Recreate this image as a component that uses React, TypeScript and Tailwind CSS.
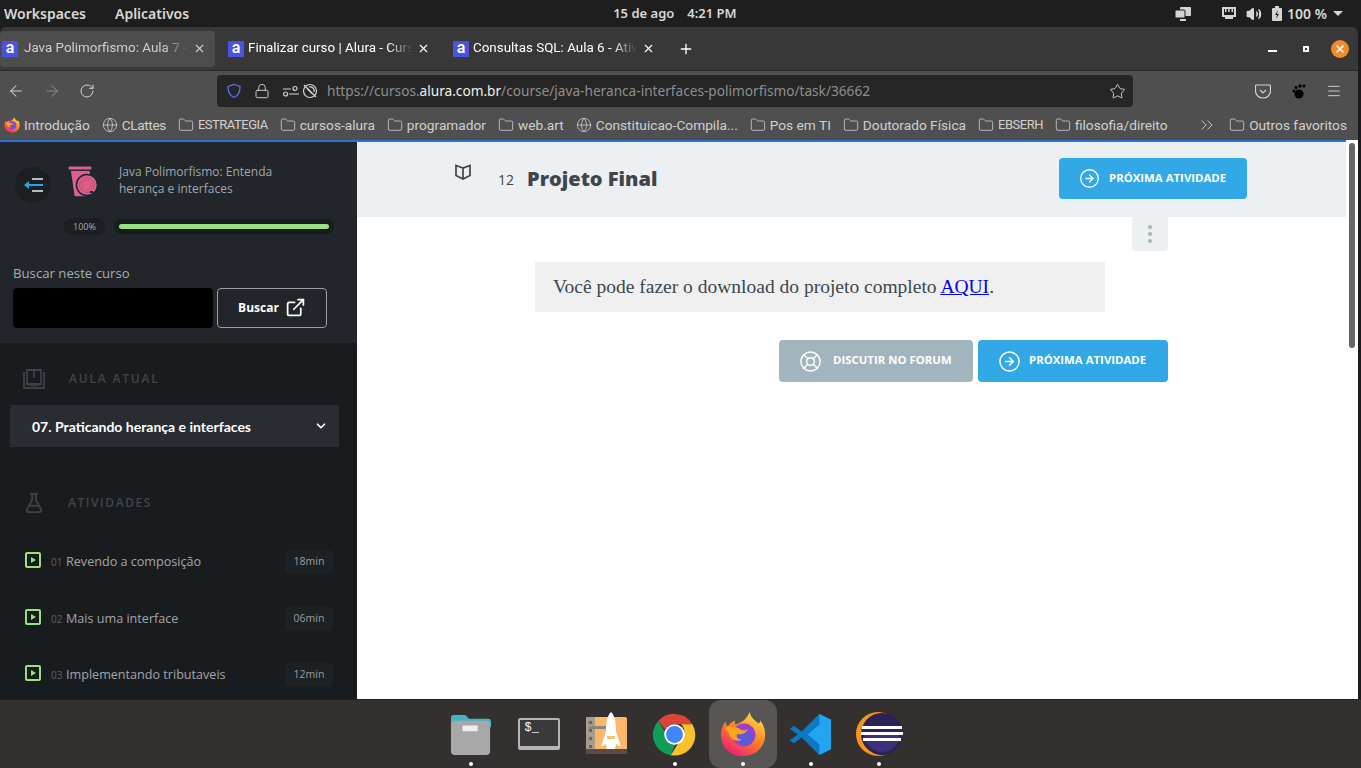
import { ArrowLeft, ArrowRight, RotateCw, Lock, Star, Menu, X, Plus, Folder, Globe, ChevronsRight, ChevronDown, FlaskConical, ExternalLink, LifeBuoy, CircleArrowRight, Volume2 } from "lucide-react"

const chrome = { fontFamily: '"Noto Sans", sans-serif' }
const roboto = { fontFamily: 'Roboto, sans-serif' }
const page = { fontFamily: '"Open Sans", sans-serif' }

function AluraIcon() {
  return (
    <span className="w-4 h-4 bg-[#4a53e0] text-white text-[16px] font-semibold leading-[14px] flex items-center justify-center shrink-0 pb-[2px]">a</span>
  )
}

function FirefoxIcon({ size }: { size: number }) {
  return (
    <svg width={size} height={size} viewBox="0 0 48 48" className="shrink-0">
      <defs>
        <linearGradient id={`ffa${size}`} x1="0.8" y1="0" x2="0.2" y2="1">
          <stop offset="0" stopColor="#ffe14d" />
          <stop offset="0.45" stopColor="#ff8a1f" />
          <stop offset="1" stopColor="#f0147a" />
        </linearGradient>
      </defs>
      <path d="M31 1c1 6 5 8 9 12 2-1 2-2 2-3 4 5 5 10 5 15 0 13-10 22-23 22S1 38 1 25C1 19 3 14 6 11c0 2 1 4 2 5 2-3 5-5 8-6-1 2-1 3 0 4 6-1 12-6 15-13z" fill={`url(#ffa${size})`} />
      <circle cx="25" cy="25" r="12" fill="#9a3fd1" />
      <circle cx="26" cy="28" r="8" fill="#5b5bd6" />
      <path d="M5 18c5-3 11-2 16 1 3 2 6 2 8-1-1 5-6 7-11 6-2 3 1 6 5 6-6 3-13-1-14-7-1-2-2-3-4-5z" fill="#ffa41f" />
    </svg>
  )
}

function Bookmark({ label, kind = "folder", textClass = "text-[13.7px]" }: { label: string; kind?: "folder" | "globe" | "firefox"; textClass?: string }) {
  return (
    <div className="flex items-center gap-[4px] text-[#cfcfcf] whitespace-nowrap">
      {kind === "folder" && <Folder size={16} strokeWidth={1.2} />}
      {kind === "globe" && <Globe size={16} strokeWidth={1.2} />}
      {kind === "firefox" && <FirefoxIcon size={16} />}
      <span className={textClass}>{label}</span>
    </div>
  )
}

function Tab({ title, active }: { title: string; active?: boolean }) {
  return (
    <div className={`h-[36px] rounded flex items-center text-[13.4px] shrink-0 ${active ? "w-[215px] bg-[#4d4d4d] text-[#cfcfcf] pl-[2px] gap-[6px]" : "w-[225px] text-white pl-[13px] gap-[4px]"}`} style={roboto}>
      <AluraIcon />
      <span className="w-[164px] overflow-hidden whitespace-nowrap [mask-image:linear-gradient(to_right,black_85%,transparent)]">{title}</span>
      <X size={13} className={`shrink-0 ${active ? "-ml-[1px]" : "ml-[1px]"}`} />
    </div>
  )
}

function ActivityRow({ num, title, time }: { num: string; title: string; time: string }) {
  return (
    <div className="h-[24px] flex items-center mt-[33px] first:mt-0 last:mt-[32px] pl-[25px] pr-[24px]">
      <span className="w-4 h-4 border-2 border-[#9be07f] rounded-[2px] flex items-center justify-center -mt-[5px] mr-[10px]">
        <span className="border-l-[5px] border-l-[#9be07f] border-y-[3px] border-y-transparent" />
      </span>
      <span className="text-[10px] text-[#5a6066] w-[15px]">{num}</span>
      <span className="text-[12.6px] text-[#a3a5a7] flex-1">{title}</span>
      <span className="text-[10.5px] text-[#9a9c9e] bg-[#1e2124] h-[24px] w-[48px] flex items-center justify-center rounded-sm">{time}</span>
    </div>
  )
}

function ActionButton({ label, className, icon }: { label: string; className: string; icon: React.ReactNode }) {
  return (
    <div className={`rounded flex items-center text-white text-[11.4px] font-bold ${className}`}>
      {icon}
      <span className="-mt-[2px]">{label}</span>
    </div>
  )
}

function DockItem({ children, active, dot = true }: { children: React.ReactNode; active?: boolean; dot?: boolean }) {
  return (
    <div className={`relative w-[68px] h-[68px] rounded-xl flex items-center justify-center ${active ? "bg-[#585654]" : ""}`}>
      {children}
      {dot && <span className="absolute bottom-[2px] left-1/2 -ml-[2px] w-[4px] h-[4px] rounded-full bg-white" />}
    </div>
  )
}

export default function App() {
  return (
    <div className="w-[1361px] h-[768px] overflow-hidden flex flex-col bg-[#1c1c1e]" style={chrome}>
      <div className="h-[27px] bg-[#1f1e1e] text-[#d8d8d8] text-[14px] font-semibold flex items-center pl-[4px] shrink-0">
        <span>Workspaces</span>
        <span className="ml-[29px]">Aplicativos</span>
        <span className="ml-[424px] text-[13px]">15 de ago</span>
        <span className="ml-[13px] text-[13px]">4:21 PM</span>
        <div className="ml-auto flex items-center pr-[18px]">
          <svg width="16" height="14" viewBox="0 0 16 14" className="mr-[31px]" fill="#d4d4d4"><rect x="5" y="0" width="11" height="9" rx="1" /><rect x="0" y="3" width="10" height="8" rx="1" stroke="#1f1e1e" /><rect x="5" y="12" width="6" height="2" /></svg>
          <svg width="14" height="13" viewBox="0 0 14 13" className="mr-[10px]" fill="#d4d4d4"><path d="M0 0h14v10h-3v2H3v-2H0z" /><path d="M2 2h10v6H2z" fill="#1f1e1e" /><path d="M3 2h1.500v3H3zM6.200 2h1.500v3H6.200zM9.500 2H11v3H9.500z" /></svg>
          <Volume2 size={16} fill="#d4d4d4" className="mr-[10px]" />
          <svg width="10" height="15" viewBox="0 0 10 15" className="mr-[5px]"><path d="M3 0h4v2h2a1 1 0 0 1 1 1v11a1 1 0 0 1-1 1H1a1 1 0 0 1-1-1V3a1 1 0 0 1 1-1h2z" fill="#d4d4d4" /><path d="M6 4 3 9h2l-1 4 3-5H5z" fill="#1f1e1e" /></svg>
          <span>100 %</span>
          <span className="ml-[6px] border-x-[5px] border-x-transparent border-t-[5px] border-t-[#d4d4d4]" />
        </div>
      </div>

      <div className="flex-1 flex flex-col w-[1358px] min-h-0">
        <div className="h-[44px] bg-[#383838] rounded-t-md flex items-center border-b border-[#2a2a2a] shrink-0">
          <Tab title="Java Polimorfismo: Aula 7 - Atividade" active />
          <Tab title="Finalizar curso | Alura - Cursos" />
          <Tab title="Consultas SQL: Aula 6 - Atividade" />
          <Plus size={16} className="text-white ml-[13px]" />
          <div className="ml-auto flex items-center pr-[9px]">
            <span className="w-[9px] h-[2px] bg-white mt-[4px] mr-[26px]" />
            <span className="w-[6px] h-[6px] border-[2px] border-white mr-[22px]" />
            <span className="w-[18px] h-[18px] rounded-full bg-[#f08c2e] flex items-center justify-center"><X size={12} strokeWidth={3} className="text-white" /></span>
          </div>
        </div>

        <div className="h-[39px] pt-[1px] bg-[#4f4f4f] flex items-center shrink-0 text-[#d4d4d4]">
          <div className="flex items-center gap-[18px] pl-[7px] w-[217px]">
            <ArrowLeft size={18} strokeWidth={1.4} />
            <ArrowRight size={18} strokeWidth={1.4} className="text-[#8a8a8a]" />
            <RotateCw size={16} strokeWidth={1.5} />
          </div>
          <div className="w-[916px] h-[32px] bg-[#262626] rounded flex items-center pl-[9px] pr-[7px]">
            <svg width="16" height="16" viewBox="0 0 16 16" fill="none" stroke="#5a6ff0" strokeWidth="1.3"><path d="M8 1.500 14 3.500c0 6-2 9.500-6 11-4-1.500-6-5-6-11z" /></svg>
            <Lock size={16} strokeWidth={1.4} className="ml-[12px]" />
            <svg width="16" height="14" viewBox="0 0 16 14" className="ml-[13px]" fill="none" stroke="#d4d4d4" strokeWidth="1.2"><circle cx="12" cy="4.500" r="2" /><path d="M0 5h8M6 10h10" /><circle cx="2.500" cy="10" r="2" /></svg>
            <svg width="16" height="16" viewBox="0 0 16 16" className="ml-[3px]" fill="none" stroke="#d4d4d4" strokeWidth="1.2"><circle cx="8" cy="8" r="6.500" /><path d="m2 2 12 12M5 5.500l5.500 5.500M7 4a4 4 0 0 1 5 5" /></svg>
            <span className="text-[13.65px] text-[#8e8e8e] ml-[9px]">https://cursos.<span className="text-[#f0f0f0]">alura.com.br</span>/course/java-heranca-interfaces-polimorfismo/task/36662</span>
            <Star size={17} strokeWidth={1.3} className="ml-auto" />
          </div>
          <div className="flex items-center flex-1 pl-[122px] text-[#d4d4d4]">
            <svg width="16" height="15" viewBox="0 0 16 15" fill="none" stroke="#d4d4d4" strokeWidth="1.200"><path d="M1.500 1h13a1 1 0 0 1 1 1v5a7.500 7 0 0 1-15 0V2a1 1 0 0 1 1-1z" /><path d="m5 6 3 3 3-3" /></svg>
            <svg width="14" height="15" viewBox="0 0 14 15" className="ml-[21px]" fill="#000"><circle cx="7" cy="10" r="4.500" /><circle cx="2" cy="7" r="1.500" /><circle cx="4" cy="3.500" r="1.500" /><circle cx="8" cy="2" r="1.700" /><circle cx="12" cy="2" r="1.500" /></svg>
            <Menu size={16} strokeWidth={1.4} className="ml-[20px]" />
          </div>
        </div>

        <div className="h-[30px] bg-[#4f4f4f] flex items-center pl-[4px] pr-[11px] gap-[12px] shrink-0" style={roboto}>
          <Bookmark label="Introdução" kind="firefox" />
          <Bookmark label="CLattes" kind="globe" textClass="text-[13.7px] tracking-[-0.4px]" />
          <Bookmark label="ESTRATEGIA" textClass="text-[13px] tracking-[-0.5px]" />
          <Bookmark label="cursos-alura" />
          <Bookmark label="programador" />
          <Bookmark label="web.art" />
          <Bookmark label="Constituicao-Compila..." kind="globe" />
          <Bookmark label="Pos em TI" />
          <Bookmark label="Doutorado Física" />
          <Bookmark label="EBSERH" textClass="text-[13px] tracking-[-0.5px]" />
          <Bookmark label="filosofia/direito" />
          <ChevronsRight size={20} strokeWidth={1.1} className="text-[#cfcfcf] ml-auto" />
          <Bookmark label="Outros favoritos" />
        </div>

        <div className="flex-1 flex min-h-0 bg-white">
          <div className="w-[1346px] flex flex-col min-h-0 shrink-0">
            <div className="h-[2px] bg-[#2b74d6] shrink-0" />
            <div className="flex-1 flex min-h-0">
              <aside className="w-[357px] flex flex-col shrink-0" style={page}>
                <div className="h-[201px] bg-[#22262a] pl-[13px] pt-[21px] shrink-0">
                  <div className="flex items-start">
                    <span className="w-[36px] h-[36px] ml-[2px] mt-[4px] rounded-full bg-[#1b1f22] flex items-center justify-center">
                      <svg width="20" height="14" viewBox="0 0 20 14"><path d="M3 7h17" stroke="#2aa4e6" strokeWidth="2" /><path d="M6 3 1 7l5 4z" fill="#2aa4e6" /><path d="M9 1h11M9 13h11" stroke="#b8bcbf" strokeWidth="2" /></svg>
                    </span>
                    <svg width="32" height="34" viewBox="0 0 32 34" className="ml-[16px] mt-[2px]">
                      <path d="M3 5h20l2 8-5 19H7z" fill="#e05f85" stroke="#12263a" strokeWidth="1.500" />
                      <circle cx="20" cy="20" r="10.500" fill="#e05f85" stroke="#12263a" strokeWidth="1.500" />
                      <circle cx="20" cy="20" r="7.500" fill="none" stroke="#c24d72" />
                      <circle cx="20" cy="20" r="5" fill="none" stroke="#c24d72" />
                      <path d="M1 1h24v4H1z" fill="#e05f85" stroke="#12263a" strokeWidth="1.200" />
                      <path d="M23 26h3v2h-3z" fill="#12263a" />
                    </svg>
                    <p className="ml-[20px] text-[12px] leading-[17px] text-[#9fa7ad] w-[190px]">Java Polimorfismo: Entenda herança e interfaces</p>
                  </div>
                  <div className="flex items-center ml-[51px] mt-[15px]">
                    <span className="w-[41px] h-[17px] rounded-full bg-[#1b1f22] text-[9px] text-[#a7adb1] flex items-center justify-center">100%</span>
                    <span className="ml-[9px] w-[220px] h-[15px] rounded-full bg-[#191c1f] flex items-center px-[5px]">
                      <span className="w-full h-[5px] rounded-full bg-[#9be07f]" />
                    </span>
                  </div>
                  <p className="text-[13.200px] text-[#a7adb1] mt-[29px]">Buscar neste curso</p>
                  <div className="flex gap-[4px] mt-[4px]">
                    <span className="w-[200px] h-[40px] bg-black rounded" />
                    <span className="w-[110px] h-[40px] rounded border border-[#9aa0a4] text-white text-[12px] font-bold flex items-center justify-center gap-[6px]">Buscar <ExternalLink size={21} strokeWidth={2} /></span>
                  </div>
                </div>

                <div className="flex-1 bg-[#191c1f] min-h-0 overflow-hidden">
                  <div className="flex items-center pl-[23px] pt-[10px] h-[62px]">
                    <svg width="22" height="20" viewBox="0 0 22 20" fill="none" stroke="#3c4247" strokeWidth="1.800"><path d="M1 3v16h20V3" /><path d="M4 1h14v14H4zM4 15l7 1.500 7-1.500M11 1v8" /></svg>
                    <span className="ml-[24px] text-[12px] tracking-[0.15em] text-[#3f454a] font-semibold">AULA ATUAL</span>
                  </div>
                  <div className="ml-[10px] w-[329px] h-[42px] bg-[#292d31] flex items-center pl-[22px] pr-[11px] text-white text-[14px] font-bold" style={{ fontFamily: "Lato, sans-serif" }}>
                    <span className="flex-1 mt-[1px]">07. Praticando herança e interfaces</span>
                    <ChevronDown size={14} strokeWidth={3} />
                  </div>
                  <div className="flex items-center pl-[23px] mt-[45px] h-[22px]">
                    <FlaskConical size={22} className="text-[#3c4247]" />
                    <span className="ml-[23px] text-[12px] tracking-[0.13em] text-[#3f454a] font-semibold">ATIVIDADES</span>
                  </div>
                  <div className="mt-[36px]">
                    <ActivityRow num="01" title="Revendo a composição" time="18min" />
                    <ActivityRow num="02" title="Mais uma interface" time="06min" />
                    <ActivityRow num="03" title="Implementando tributaveis" time="12min" />
                  </div>
                </div>
              </aside>

              <main className="flex-1 flex flex-col min-w-0" style={page}>
                <div className="h-[75px] bg-[#edf0f2] flex items-center pl-[98px] shrink-0">
                  <svg width="16" height="16" viewBox="0 0 16 16" fill="none" stroke="#3d464d" strokeWidth="1.700" className="-mt-[16px]"><path d="M8 4 1 1.500v10L8 15l7-3.500v-10zM8 4v11" /></svg>
                  <span className="ml-[27px] text-[14px] text-[#3d464d] -mt-[1px]">12</span>
                  <span className="ml-[13px] text-[20px] font-extrabold text-[#3d464d] -mt-[1px]">Projeto Final</span>
                  <ActionButton label="PRÓXIMA ATIVIDADE" className="ml-auto mr-[99px] -mt-[2px] w-[188px] h-[41px] bg-[#33a8e6] pl-[20px] gap-[9px]" icon={<CircleArrowRight size={21} strokeWidth={1.5} />} />
                </div>
                <div className="flex justify-end pr-[178px]">
                  <span className="w-[36px] h-[34px] bg-[#edf0f2] rounded-b flex flex-col items-center justify-center gap-[3px]">
                    <span className="w-[4px] h-[4px] rounded-full bg-[#a3b5bd]" />
                    <span className="w-[4px] h-[4px] rounded-full bg-[#a3b5bd]" />
                    <span className="w-[4px] h-[4px] rounded-full bg-[#a3b5bd]" />
                  </span>
                </div>
                <div className="ml-[178px] mt-[11px] w-[570px] h-[50px] bg-[#f0f0f0] flex items-center pl-[18px] text-[19.5px] text-[#3d464d]" style={{ fontFamily: '"Liberation Serif", serif' }}>
                  <span>Você pode fazer o download do projeto completo <a className="text-[#0000ee] underline">AQUI</a>.</span>
                </div>
                <div className="flex justify-end gap-[5px] pr-[178px] mt-[28px]">
                  <ActionButton label="DISCUTIR NO FORUM" className="w-[194px] h-[42px] bg-[#a2b5be] pl-[20px] gap-[11px]" icon={<LifeBuoy size={23} strokeWidth={1.5} />} />
                  <ActionButton label="PRÓXIMA ATIVIDADE" className="w-[190px] h-[42px] bg-[#33a8e6] pl-[20px] gap-[8px]" icon={<CircleArrowRight size={23} strokeWidth={1.5} />} />
                </div>
              </main>
            </div>
          </div>
          <div className="flex-1 pl-[3px] pt-[3px]">
            <div className="w-[6px] h-[205px] rounded-full bg-[#666]" />
          </div>
        </div>
      </div>

      <div className="h-[69px] bg-[#33302f] border-t border-[#222] flex items-center justify-center shrink-0 pr-[12px]">
        <DockItem>
          <svg width="42" height="44" viewBox="0 0 44 46">
            <path d="M1 6a3 3 0 0 1 3-3h12l4 4h20a3 3 0 0 1 3 3v6H1z" fill="#42b4c4" />
            <rect x="1" y="9" width="41" height="36" rx="4" fill="#a8a8a8" />
            <rect x="13" y="14" width="16" height="6" rx="1" fill="#eee" />
          </svg>
        </DockItem>
        <DockItem dot={false}>
          <span className="w-[42px] h-[32px] bg-[#3a3a3a] border-[2px] border-[#b5b5b5] border-b-[4px] rounded-[2px] text-white text-[12px] pl-[5px] leading-[16px]" style={{ fontFamily: '"Liberation Mono", monospace' }}>$_</span>
        </DockItem>
        <DockItem dot={false}>
          <svg width="41" height="44" viewBox="0 0 41 44">
            <rect x="0" y="5" width="41" height="37" rx="2" fill="#fbb76a" />
            <rect x="0" y="5" width="9" height="37" fill="#a89a8c" />
            <path d="M3 9h3v3H3zM3 17h3v3H3zM3 25h3v3H3zM3 33h3v3H3z" fill="#6e6258" />
            <rect x="3" y="14" width="20" height="3" fill="#8f8478" />
            <rect x="0" y="37" width="41" height="5" fill="#5c4a44" />
            <path d="M25 0c4 4 5 10 5 19l5 16-5-3-1 5h-8l-1-5-5 3 5-16c0-9 1-15 5-19z" fill="#fff" />
            <path d="M21 24h8v3h-8z" fill="#f4c56c" />
          </svg>
        </DockItem>
        <DockItem>
          <svg width="45" height="45" viewBox="0 0 48 48">
            <path d="M24 2a22 22 0 0 1 19 11H24a11 11 0 0 0-10 6L7 9a22 22 0 0 1 17-7z" fill="#db4437" />
            <path d="M7 9l9.500 17a9 9 0 0 0 9 7L20 46A22 22 0 0 1 7 9z" fill="#0f9d58" />
            <path d="M43 13a22 22 0 0 1-23 33l10-16a11 11 0 0 0 1-17z" fill="#fbc02d" />
            <circle cx="24" cy="24" r="11" fill="#fff" />
            <circle cx="24" cy="24" r="9" fill="#4285f4" />
          </svg>
        </DockItem>
        <DockItem active><FirefoxIcon size={46} /></DockItem>
        <DockItem>
          <svg width="43" height="43" viewBox="0 0 44 44">
            <path d="M31 1 43 7v30l-12 6L13 25l-8 6-4-3 8-6-8-6 4-3 8 6z" fill="#0b7ac4" />
            <path d="M31 1 43 7v30l-12 6zM31 12 19 22l12 10z" fill="#22a4ef" fillRule="evenodd" />
          </svg>
        </DockItem>
        <DockItem>
          <svg width="48" height="46" viewBox="0 0 48 46">
            <circle cx="23" cy="23" r="22" fill="#f7941e" />
            <circle cx="27" cy="23" r="21" fill="#2c2255" />
            <path d="M9 23a18 18 0 0 0 36 0z" fill="#3d2f7a" />
            <path d="M7 15h40v3H7zM6 21h42v3H6zM8 27h38v3H8z" fill="#fff" />
          </svg>
        </DockItem>
      </div>
    </div>
  )
}
